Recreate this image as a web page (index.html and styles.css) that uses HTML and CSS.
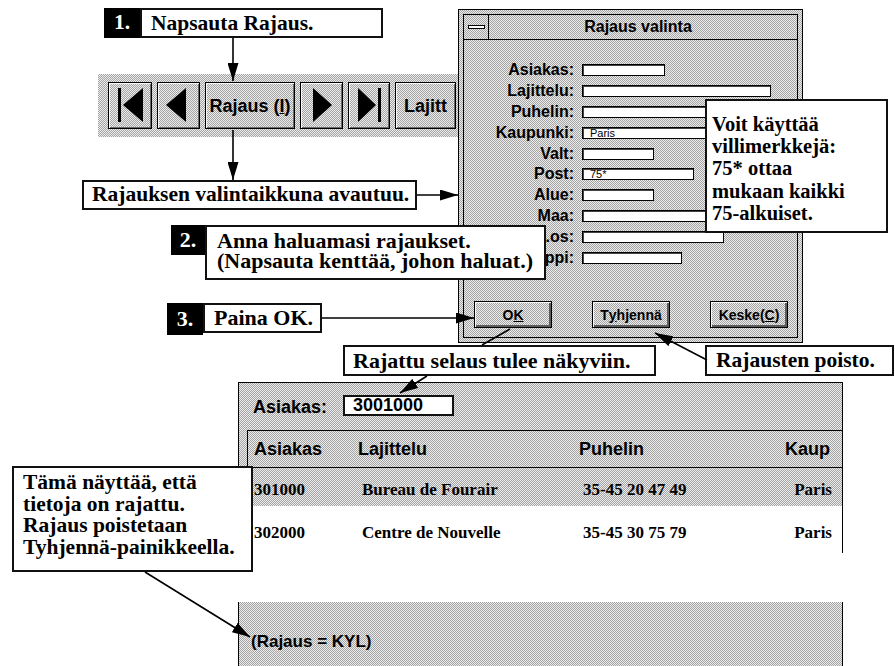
FILE: index.html
```html
<!DOCTYPE html>
<html>
<head>
    <title>Rajaus valinta</title>
    <meta charset="utf-8">
    <link rel="stylesheet" href="styles.css">
</head>
<body>
<div class="stage">

    <!-- step 1 -->
    <div class="step step-1"><span class="num">1.</span><span class="say">Napsauta Rajaus.</span></div>

    <!-- browse toolbar -->
    <div class="toolbar dither">
        <div class="tb tb-first dither">
            <svg width="42" height="45" viewBox="0 0 42 45"><rect x="9" y="5" width="3" height="34"/><path d="M14 22L34 5V39Z"/></svg>
        </div>
        <div class="tb tb-prev dither">
            <svg width="41" height="45" viewBox="0 0 41 45"><path d="M8 22L28 5V39Z"/></svg>
        </div>
        <div class="tb tb-filter dither">Rajaus (<u>I</u>)</div>
        <div class="tb tb-next dither">
            <svg width="41" height="45" viewBox="0 0 41 45"><path d="M31 22L12 5V39Z"/></svg>
        </div>
        <div class="tb tb-last dither">
            <svg width="40" height="45" viewBox="0 0 40 45"><path d="M27 22L9 5V39Z"/><rect x="29" y="5" width="3" height="34"/></svg>
        </div>
        <div class="tb tb-sort dither">La<u>j</u>itt</div>
    </div>

    <div class="callout c-opens">Rajauksen valintaikkuna avautuu.</div>

    <!-- filter dialog -->
    <div class="dialog dither">
        <div class="dlg-inner">
            <div class="dlg-title">
                <span class="sysbox"><i></i></span>
                <span class="dlg-name">Rajaus valinta</span>
            </div>
            <div class="dlg-form">
                <label>Asiakas:</label><span class="fld w83"></span>
                <label>Lajittelu:</label><span class="fld w189"></span>
                <label>Puhelin:</label><span class="fld w189"></span>
                <label>Kaupunki:</label><span class="fld w189">Paris</span>
                <label>Valt:</label><span class="fld w72"></span>
                <label>Post:</label><span class="fld w112">75*</span>
                <label>Alue:</label><span class="fld w72"></span>
                <label>Maa:</label><span class="fld w189"></span>
                <label>.os:</label><span class="fld w142"></span>
                <label>ppi:</label><span class="fld w100"></span>
            </div>
            <div class="dlg-buttons">
                <div class="dlg-btn dither">O<u>K</u></div>
                <div class="dlg-btn dither">T<u>y</u>hjennä</div>
                <div class="dlg-btn dither">Keske(<u>C</u>)</div>
            </div>
        </div>
    </div>

    <div class="note">Voit käyttää<br>villimerkkejä:<br>75* ottaa<br>mukaan kaikki<br>75-alkuiset.</div>

    <div class="step step-2"><span class="num">2.</span><span class="say">Anna haluamasi rajaukset.<br>(Napsauta kenttää, johon haluat.)</span></div>

    <div class="step step-3"><span class="num">3.</span><span class="say">Paina OK.</span></div>

    <div class="callout c-shown">Rajattu selaus tulee näkyviin.</div>
    <div class="callout c-clear">Rajausten poisto.</div>

    <!-- filtered browse -->
    <div class="browse dither">
        <div class="brw-head">
            <span class="brw-label">Asiakas:</span>
            <span class="brw-field">3001000</span>
        </div>
        <div class="brw-table">
            <div class="brw-row brw-cols dither">
                <span>Asiakas</span><span>Lajittelu</span><span>Puhelin</span><span class="end">Kaup</span>
            </div>
            <div class="brw-row brw-data dither">
                <span class="id">301000</span><span>Bureau de Fourair</span><span>35-45 20 47 49</span><span class="end">Paris</span>
            </div>
            <div class="brw-row brw-data second">
                <span class="id">302000</span><span>Centre de Nouvelle</span><span>35-45 30 75 79</span><span class="end">Paris</span>
            </div>
        </div>
    </div>

    <div class="browse-foot dither">(Rajaus = KYL)</div>

    <div class="callout c-info">Tämä näyttää, että<br>tietoja on rajattu.<br>Rajaus poistetaan<br>Tyhjennä-painikkeella.</div>

    <!-- arrows -->
    <svg class="arrows" width="895" height="666" viewBox="0 0 895 666">
        <defs>
            <marker id="head" viewBox="0 0 18 11" refX="18" refY="5.5" markerWidth="18" markerHeight="11" markerUnits="userSpaceOnUse" orient="auto">
                <path d="M0 0L18 5.5L0 11Z"/>
            </marker>
        </defs>
        <g stroke="#000" stroke-width="1.6" fill="none">
            <line x1="233" y1="38" x2="233" y2="81" marker-end="url(#head)"/>
            <line x1="233" y1="130" x2="233" y2="180" marker-end="url(#head)"/>
            <line x1="417" y1="195" x2="458" y2="195" marker-end="url(#head)"/>
            <line x1="322" y1="318" x2="474" y2="318" marker-end="url(#head)"/>
            <line x1="510" y1="329" x2="482" y2="345"/>
            <line x1="707" y1="360" x2="655" y2="333" marker-end="url(#head)"/>
            <line x1="427" y1="376" x2="400" y2="393" marker-end="url(#head)"/>
            <line x1="145" y1="572" x2="250" y2="637" marker-end="url(#head)"/>
        </g>
    </svg>
</div>
</body>
</html>
```

FILE: styles.css
```css
/* Help page diagram: filter dialog walkthrough */
body {
    margin: 0;
    background: #fff;
}

.stage {
    position: relative;
    width: 895px;
    height: 666px;
    overflow: hidden;
    font-family: "Liberation Sans", Arial, sans-serif;
    color: #000;
}

/* old-style 50% dither gray */
.dither {
    background: repeating-conic-gradient(#a4a4a4 0 25%, #ececec 0 50%) 0 0 / 2px 2px;
}

/* Callouts */
.callout {
    position: absolute;
    box-sizing: border-box;
    background: #fff;
    border: 2px solid #111;
    font: bold 21.5px/1 "Liberation Serif", "Times New Roman", serif;
    padding-left: 8px;
    display: flex;
    align-items: center;
    white-space: nowrap;
    z-index: 5;
}

.c-opens {
    left: 82px;
    top: 180px;
    width: 335px;
    height: 30px;
}

.c-shown {
    left: 343px;
    top: 345px;
    width: 313px;
    height: 31px;
    font-size: 22px;
}

.c-clear {
    left: 705px;
    top: 345px;
    width: 189px;
    height: 31px;
    padding-left: 9px;
}

.c-info {
    left: 12px;
    top: 466px;
    width: 241px;
    height: 106px;
    display: block;
    line-height: 21.5px;
    padding: 4px 0 0 9px;
}

.note {
    position: absolute;
    left: 705px;
    top: 99px;
    width: 183px;
    height: 134px;
    box-sizing: border-box;
    background: #fff;
    border: 2px solid #111;
    font: bold 20.5px/22.2px "Liberation Serif", "Times New Roman", serif;
    padding: 12px 0 0 5px;
    z-index: 5;
}

/* Numbered steps */
.step {
    position: absolute;
    display: flex;
    align-items: flex-start;
    z-index: 5;
    font: bold 21.5px/1 "Liberation Serif", "Times New Roman", serif;
}

.step .num {
    background: #000;
    color: #fff;
    display: flex;
    align-items: center;
    justify-content: center;
    box-sizing: border-box;
}

.step .say {
    background: #fff;
    border: 2px solid #111;
    box-sizing: border-box;
    padding-left: 9px;
    white-space: nowrap;
}

.step-1 {
    left: 104px;
    top: 8px;
}

.step-1 .num {
    width: 36px;
    height: 30px;
}

.step-1 .say {
    width: 243px;
    height: 30px;
    line-height: 26px;
}

.step-2 {
    left: 171px;
    top: 225px;
    font-size: 22px;
}

.step-2 .num {
    width: 34px;
    height: 30px;
}

.step-2 .say {
    width: 341px;
    height: 55px;
    line-height: 20px;
    padding-top: 4px;
    padding-left: 10px;
}

.step-3 {
    left: 167px;
    top: 303px;
    font-size: 22px;
}

.step-3 .num {
    width: 36px;
    height: 32px;
}

.step-3 .say {
    width: 119px;
    height: 30px;
    line-height: 26px;
}

/* Toolbar */
.toolbar {
    position: absolute;
    left: 98px;
    top: 74px;
    width: 360px;
    height: 63px;
    box-sizing: border-box;
    padding: 8px 0 0 10px;
    display: flex;
    gap: 5px;
    z-index: 1;
}

.tb {
    height: 47px;
    box-sizing: border-box;
    border: 1px solid #000;
    box-shadow: inset 1px 1px 0 #f6f6f6, inset -1px -1px 0 #6a6a6a;
    display: flex;
    align-items: center;
    justify-content: center;
    font: bold 18px/1 "Liberation Sans", Arial, sans-serif;
}

.tb svg {
    display: block;
}

.tb-first { width: 44px; }
.tb-prev { width: 43px; }
.tb-filter { width: 90px; }
.tb-next { width: 43px; }
.tb-last { width: 42px; }
.tb-sort { width: 61px; }

/* Dialog */
.dialog {
    position: absolute;
    left: 458px;
    top: 9px;
    width: 345px;
    height: 334px;
    box-sizing: border-box;
    border: 1px solid #000;
    padding: 4px;
    z-index: 2;
}

.dlg-inner {
    height: 100%;
    box-sizing: border-box;
    border: 1px solid #000;
    display: flex;
    flex-direction: column;
}

.dlg-title {
    height: 24px;
    flex-shrink: 0;
    border-bottom: 1px solid #000;
    display: flex;
}

.sysbox {
    width: 24px;
    border-right: 1px solid #000;
    display: flex;
    align-items: center;
    justify-content: center;
}

.sysbox i {
    width: 17px;
    height: 4px;
    box-sizing: border-box;
    border: 1px solid #000;
    background: #fff;
}

.dlg-name {
    flex: 1;
    text-align: center;
    font: bold 16px/24px "Liberation Sans", Arial, sans-serif;
    padding-right: 10px;
}

.dlg-form {
    display: grid;
    grid-template-columns: 110px auto;
    grid-auto-rows: 20.8px;
    column-gap: 8px;
    padding-top: 20px;
    align-items: center;
    justify-items: start;
}

.dlg-form label {
    justify-self: end;
    font: bold 16px/1 "Liberation Sans", Arial, sans-serif;
    white-space: nowrap;
}

.fld {
    height: 12px;
    box-sizing: border-box;
    border: 1px solid #000;
    box-shadow: inset 1px 1px 0 #444;
    background: #fff;
    font: 11px/10px "Liberation Sans", Arial, sans-serif;
    padding-left: 7px;
}

.w72 { width: 72px; }
.w83 { width: 83px; }
.w100 { width: 100px; }
.w112 { width: 112px; }
.w142 { width: 142px; }
.w189 { width: 189px; }

.dlg-buttons {
    margin-top: auto;
    display: flex;
    justify-content: space-between;
    padding: 0 9px 9px 10px;
}

.dlg-btn {
    width: 78px;
    height: 27px;
    box-sizing: border-box;
    border: 1px solid #000;
    box-shadow: inset 1px 1px 0 #f6f6f6, inset -2px -2px 0 #5c5c5c;
    display: flex;
    align-items: center;
    justify-content: center;
    font: bold 14px/1 "Liberation Sans", Arial, sans-serif;
}

/* Browse window */
.browse {
    position: absolute;
    left: 238px;
    top: 382px;
    width: 605px;
    height: 171px;
    box-sizing: border-box;
    border: 1px solid #000;
    border-bottom: none;
    display: flex;
    flex-direction: column;
    z-index: 1;
}

.brw-head {
    height: 47px;
    flex-shrink: 0;
    display: flex;
    align-items: center;
    padding-left: 14px;
}

.brw-label {
    width: 90px;
    font: bold 18px/1 "Liberation Sans", Arial, sans-serif;
}

.brw-field {
    width: 111px;
    height: 21px;
    box-sizing: border-box;
    border: 2px solid #111;
    background: #fff;
    font: bold 18px/17px "Liberation Sans", Arial, sans-serif;
    padding-left: 8px;
    margin-top: -2px;
}

.brw-table {
    flex: 1;
    margin-left: 8px;
    border-left: 1px solid #000;
    border-top: 1px solid #000;
    background: #fff;
}

.brw-row {
    display: grid;
    grid-template-columns: 104px 221px 1fr auto;
    padding: 0 12px 0 6px;
}

.brw-row .end {
    text-align: right;
}

.brw-cols {
    height: 36px;
    border-bottom: 1px solid #000;
    font: bold 18px/36px "Liberation Sans", Arial, sans-serif;
}

.brw-data {
    font: bold 17px/30px "Liberation Serif", "Times New Roman", serif;
    height: 38px;
    box-sizing: border-box;
    padding-top: 7px;
    padding-right: 10px;
}

.brw-data span {
    padding-left: 4px;
}

.brw-data .id {
    padding-left: 0;
}

.brw-data.second {
    padding-top: 12px;
}

.browse-foot {
    position: absolute;
    left: 238px;
    top: 602px;
    width: 605px;
    height: 64px;
    box-sizing: border-box;
    border-left: 1px solid #000;
    border-right: 1px solid #000;
    padding: 31px 0 0 12px;
    font: bold 17px/1 "Liberation Sans", Arial, sans-serif;
}

.arrows {
    position: absolute;
    left: 0;
    top: 0;
    z-index: 10;
    pointer-events: none;
}

.arrows path {
    fill: #000;
    stroke: none;
}
```
